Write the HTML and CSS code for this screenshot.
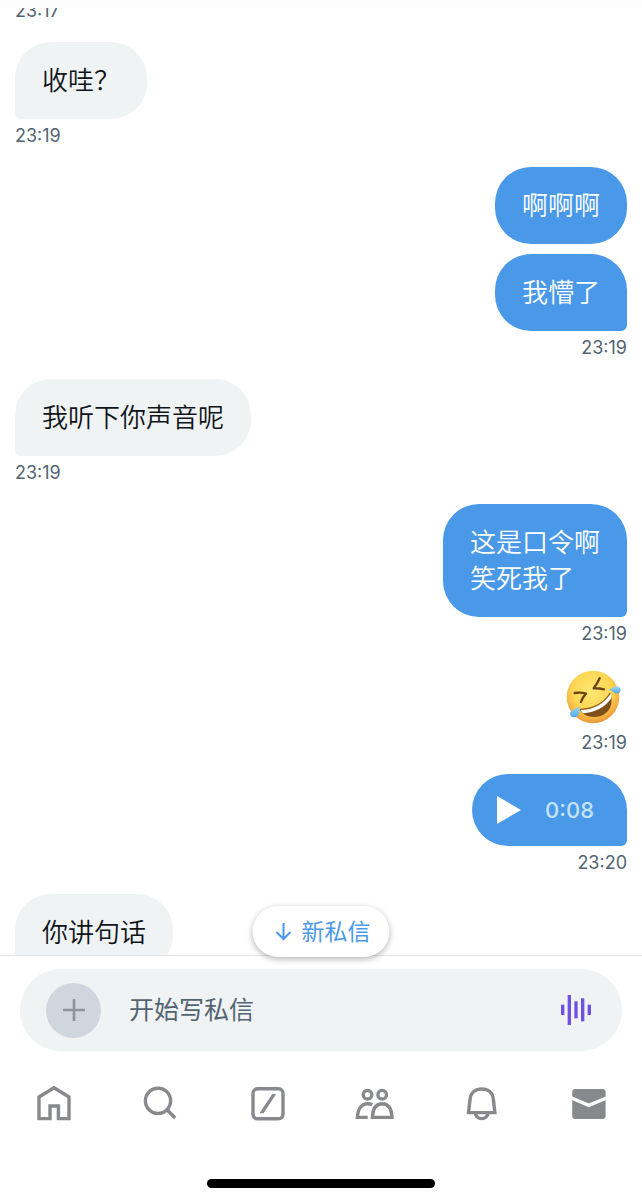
FILE: index.html
```html
<!DOCTYPE html>
<html lang="zh-CN">

<head>
    <meta charset="UTF-8">
    <meta name="viewport" content="width=device-width, initial-scale=1.0">
    <title>私信</title>
    <link rel="stylesheet" href="styles.css">
</head>

<body>
    <div class="top"></div>

    <!-- 聊天记录 -->
    <main class="chat">
        <div class="list">
            <div class="msg">
                <time class="time">23:17</time>
            </div>
            <div class="msg">
                <p class="bubble tail">收哇？</p>
                <time class="time">23:19</time>
            </div>
            <div class="msg me">
                <p class="bubble">啊啊啊</p>
                <p class="bubble tail">我懵了</p>
                <time class="time">23:19</time>
            </div>
            <div class="msg">
                <p class="bubble tail">我听下你声音呢</p>
                <time class="time">23:19</time>
            </div>
            <div class="msg me">
                <p class="bubble tail">这是口令啊<br>笑死我了</p>
                <time class="time">23:19</time>
            </div>
            <div class="msg me">
                <div class="emoji">
                    <svg viewBox="75 40 174 174" width="58" height="58" role="img" aria-label="笑哭">
                        <defs>
                            <radialGradient id="face" cx="0.48" cy="0.38" r="0.62">
                                <stop offset="0" stop-color="#ffe873" />
                                <stop offset="0.6" stop-color="#fcd653" />
                                <stop offset="0.88" stop-color="#f2ac40" />
                                <stop offset="1" stop-color="#e8963a" />
                            </radialGradient>
                            <linearGradient id="tear" x1="0" y1="0" x2="0" y2="1">
                                <stop offset="0" stop-color="#9bdaf9" />
                                <stop offset="1" stop-color="#4fa9e2" />
                            </linearGradient>
                        </defs>
                        <circle cx="159" cy="127" r="79" fill="url(#face)" />
                        <g fill="none" stroke="#6b4311" stroke-width="7" stroke-linecap="round" stroke-linejoin="round">
                            <path d="M104 115 Q122 112 138 117 Q128 127 123 142" />
                            <path d="M179 71 Q172 87 161 101 Q176 100 192 104" />
                        </g>
                        <path d="M119 165 C158 166 192 146 211 115 C222 147 209 174 184 183 C157 192 131 184 119 165 Z" fill="#7f4f1a" />
                        <path d="M119 164 C158 165 192 146 211 115 C215 121 215 128 212 134 C192 160 164 174 129 176 Z" fill="#fff" />
                        <path d="M119 164 C158 165 192 146 211 115" fill="none" stroke="#93601f" stroke-width="4" />
                        <path d="M118 155 C121 173 116 187 104 188 C91 189 86 176 94 169 C101 163 110 162 118 155 Z" fill="url(#tear)" />
                        <path d="M206 105 C216 103 222 94 232 95 C244 97 246 111 236 116 C225 120 218 107 206 105 Z" fill="url(#tear)" />
                    </svg>
                </div>
                <time class="time">23:19</time>
            </div>
            <div class="msg me">
                <button class="bubble voice tail" type="button">
                    <svg viewBox="0 0 24 28" width="24" height="28" aria-hidden="true">
                        <path d="M0 0 L24 14 L0 28 Z" fill="#fff" />
                    </svg>
                    <span>0:08</span>
                </button>
                <time class="time">23:20</time>
            </div>
            <div class="msg">
                <p class="bubble tail">你讲句话</p>
            </div>
        </div>
    </main>

    <footer class="footer">
        <!-- 新私信提示 -->
        <button class="new" type="button">
            <svg viewBox="0 0 16 18" width="16" height="18" aria-hidden="true">
                <path d="M8 0 V16 M1 9 L8 16 L15 9" fill="none" stroke="#4a99e9" stroke-width="2" />
            </svg>
            <span>新私信</span>
        </button>

        <!-- 输入框 -->
        <form class="send">
            <button class="add" type="button" aria-label="添加">
                <svg viewBox="0 0 22 22" width="22" height="22" aria-hidden="true">
                    <path d="M11 0 V22 M0 11 H22" stroke="#8f9298" stroke-width="2.6" />
                </svg>
            </button>
            <input class="text" type="text" placeholder="开始写私信" aria-label="开始写私信">
            <button class="record" type="button" aria-label="语音">
                <svg viewBox="0 0 90 90" width="30" height="30" fill="#6f50e3" aria-hidden="true">
                    <rect x="0" y="29" width="10" height="31" />
                    <rect x="20" y="0" width="10" height="90" />
                    <rect x="40" y="19" width="10" height="51" />
                    <rect x="60" y="10" width="10" height="69" />
                    <rect x="80" y="29" width="10" height="31" />
                </svg>
            </button>
        </form>

        <!-- 底部导航 -->
        <nav class="nav">
            <a href="#" aria-label="主页">
                <svg class="icon" viewBox="0 0 40 40">
                    <path d="M20 4.8 L35 14 V35.6 H24.4 V23 H16 V35.6 H5 V14 Z" />
                </svg>
            </a>
            <a href="#" aria-label="搜索">
                <svg class="icon" viewBox="0 0 40 40">
                    <circle cx="17" cy="17.8" r="12.6" />
                    <path d="M26 26.8 L34.2 35" />
                </svg>
            </a>
            <a href="#" aria-label="短文">
                <svg class="icon" viewBox="0 0 40 40">
                    <rect x="5" y="5.8" width="30" height="30" rx="4.5" />
                    <path class="solid" d="M11.5 30.3 L24.2 11 H28.2 L15.5 30.3 Z" />
                </svg>
            </a>
            <a href="#" aria-label="社群">
                <svg class="icon" viewBox="0 0 40 40">
                    <circle cx="12.5" cy="11.7" r="4.3" />
                    <circle cx="27.2" cy="11.7" r="4.3" />
                    <path d="M17.4 21.5 C16 21 14.4 20.7 12.8 20.7 C6.4 20.7 2.8 26 2.4 34.4 H12.7" />
                    <path d="M17.4 34.4 C17.8 26 21 20.7 27.2 20.7 S36.6 26 37 34.4 Z" />
                </svg>
            </a>
            <a href="#" aria-label="通知">
                <svg class="icon" viewBox="0 0 40 40">
                    <path d="M6.5 29.6 L8.1 16 C8.7 9.5 13.5 6 19.7 6 S30.7 9.5 31.3 16 L32.9 29.6 Z" />
                    <path d="M13.2 30 C14 34 17 35.6 19.7 35.6 S25.4 34 26.2 30" />
                </svg>
            </a>
            <a href="#" aria-label="私信">
                <svg class="icon" viewBox="0 0 40 40">
                    <rect class="solid" x="3.2" y="6" width="33.4" height="30" rx="3" />
                    <path class="fold" d="M2 14.7 L19.8 22.3 L38 14.7" />
                </svg>
            </a>
        </nav>

        <div class="bar"></div>
    </footer>
</body>

</html>
```
FILE: styles.css
```css
* {
    box-sizing: border-box;
}

body {
    display: flex;
    flex-direction: column;
    height: 100vh;
    margin: 0;
    overflow: hidden;
    background-color: #fff;
    color: #0f1419;
    font-family: Inter, "Noto Sans CJK SC", sans-serif;
}

button,
input {
    margin: 0;
    padding: 0;
    border: none;
    background: none;
    font-family: inherit;
}

.top {
    flex: none;
    height: 8px;
    background-color: #fdfdfe;
}

/* 聊天记录 */
.chat {
    flex: 1;
    min-height: 0;
    overflow: hidden;
}

.list {
    margin-top: -14px;
    padding: 0 15px;
}

.msg {
    display: flex;
    flex-direction: column;
    align-items: flex-start;
    margin-bottom: 14px;
}

.me {
    align-items: flex-end;
}

.bubble {
    margin: 0;
    padding: 21px 27px 20px;
    border-radius: 36px;
    background-color: #eff3f4;
    font-size: 26px;
    font-weight: 350;
    line-height: 36px;
}

.bubble + .bubble {
    margin-top: 10px;
}

.tail {
    border-bottom-left-radius: 6px;
}

.me .bubble {
    background-color: #4a99e9;
    color: #fff;
}

.me .tail {
    border-bottom-left-radius: 36px;
    border-bottom-right-radius: 6px;
}

.time {
    color: #536471;
    font-size: 18px;
    line-height: 34px;
}

.emoji {
    display: flex;
    align-items: flex-end;
    height: 61px;
    padding-right: 4px;
}

.voice {
    display: flex;
    align-items: center;
    gap: 24px;
    padding: 18px 33px 18px 25px;
}

.voice span {
    color: #c5e3fb;
    font-size: 22px;
    font-weight: 500;
}

/* 底部 */
.footer {
    flex: none;
    position: relative;
    border-top: 1px solid #e1e5ea;
    background-color: #fff;
}

.new {
    display: flex;
    align-items: center;
    gap: 10px;
    position: absolute;
    top: -50px;
    left: 50%;
    height: 51px;
    padding: 0 19px 0 23px;
    transform: translateX(-50%);
    border-radius: 26px;
    background-color: #fff;
    box-shadow: 0 2px 6px rgba(0, 0, 0, 0.3);
    color: #4a99e9;
    font-size: 23px;
    white-space: nowrap;
}

.new span {
    padding-bottom: 4px;
}

.send {
    display: flex;
    align-items: center;
    height: 82px;
    margin: 13px 20px 0;
    padding: 0 31px 0 26px;
    border-radius: 41px;
    background-color: #eff3f4;
}

.add {
    display: flex;
    flex: none;
    align-items: center;
    justify-content: center;
    width: 55px;
    height: 55px;
    border-radius: 50%;
    background-color: #cfd6de;
}

.text {
    flex: 1;
    min-width: 0;
    margin: 0 28px;
    color: #0f1419;
    font-size: 25px;
    line-height: 36px;
    outline: none;
}

.text::placeholder {
    color: #536471;
    opacity: 1;
}

.record {
    display: flex;
    flex: none;
}

.nav {
    display: grid;
    grid-template-columns: repeat(6, 1fr);
    margin-top: 32px;
}

.nav a {
    display: flex;
    justify-content: center;
}

.icon {
    width: 40px;
    height: 40px;
    fill: none;
    stroke: #87898c;
    stroke-width: 3.4;
}

.icon .solid {
    fill: #87898c;
    stroke: none;
}

.icon .fold {
    stroke: #fff;
}

.bar {
    width: 228px;
    height: 9px;
    margin: 56px auto 12px;
    border-radius: 5px;
    background-color: #000;
}
```
